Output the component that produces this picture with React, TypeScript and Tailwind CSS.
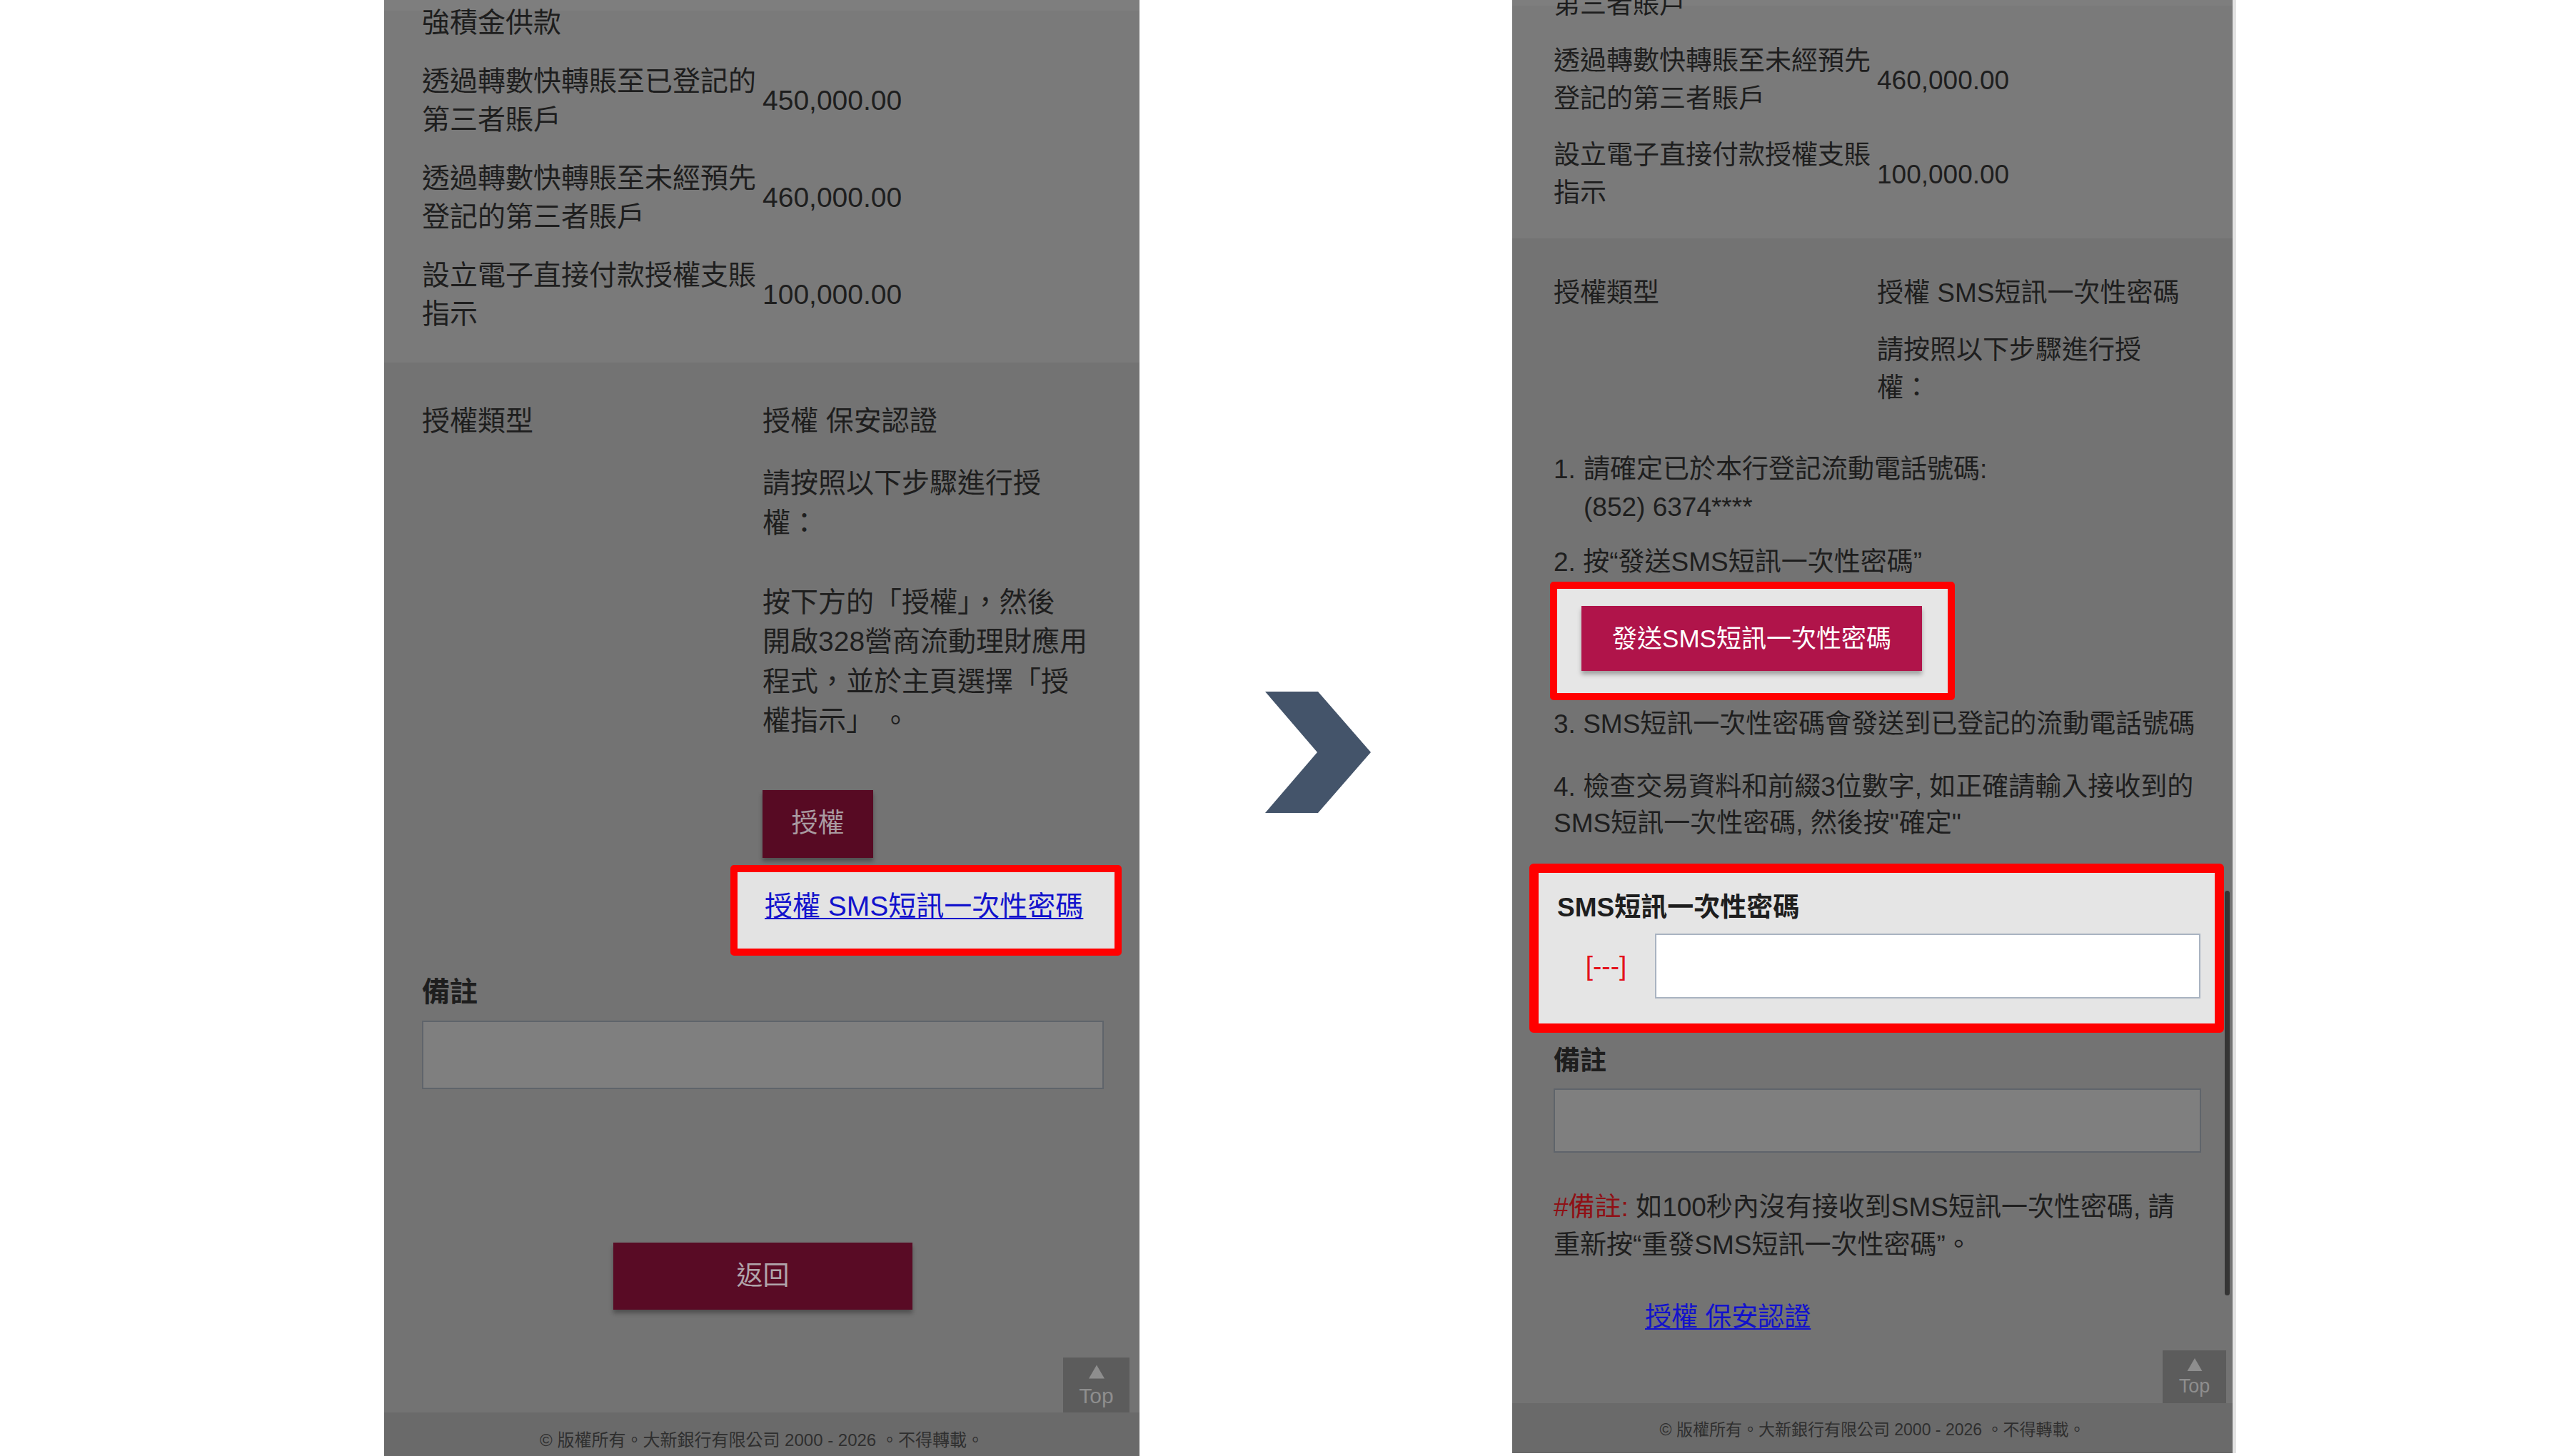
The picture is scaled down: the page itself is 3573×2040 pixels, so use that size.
import type { ReactNode } from "react";

const FONT = "font-['Liberation_Sans','Noto_Sans_CJK_TC',sans-serif]";

function AmountRowL({ label, value }: { label: ReactNode; value: string }) {
  return (
    <div className="grid grid-cols-[477px_1fr] items-center py-[14px]">
      <div className="whitespace-nowrap">{label}</div>
      <div>{value}</div>
    </div>
  );
}

function AmountRowR({ label, value }: { label: ReactNode; value: string }) {
  return (
    <div className="grid grid-cols-[453px_1fr] items-center py-[13px]">
      <div className="whitespace-nowrap">{label}</div>
      <div>{value}</div>
    </div>
  );
}

function TopButton({ className, text, tri }: { className: string; text: string; tri: string }) {
  return (
    <div className={`absolute flex flex-col items-center bg-[#5c5c5c] text-[#8e8e8e] ${className}`}>
      <svg viewBox="0 0 22 19" className={tri}>
        <polygon points="11,0 22,19 0,19" fill="#8e8e8e" />
      </svg>
      <span className={text}>Top</span>
    </div>
  );
}

function LeftPanel() {
  return (
    <div className="relative flex h-[2040px] w-[1058px] shrink-0 flex-col overflow-hidden bg-[#737373] text-[39px] text-[#1e1e1e]">
      {/* amounts */}
      <div className="border-t-[15px] border-[#7e7e7e] bg-[#7a7a7a] pb-[27px] pl-[53px] pr-[50px] leading-[54px]">
        <div className="-mt-[10px] pb-[14px]">強積金供款</div>
        <AmountRowL
          label={<>透過轉數快轉賬至已登記的<br />第三者賬戶</>}
          value="450,000.00"
        />
        <AmountRowL
          label={<>透過轉數快轉賬至未經預先<br />登記的第三者賬戶</>}
          value="460,000.00"
        />
        <AmountRowL
          label={<>設立電子直接付款授權支賬<br />指示</>}
          value="100,000.00"
        />
      </div>

      {/* authorisation */}
      <div className="flex-1 pl-[53px] pr-[50px] pt-[54px]">
        <div className="grid grid-cols-[477px_1fr]">
          <div className="leading-[55px]">授權類型</div>
          <div className="flex flex-col items-start">
            <p className="leading-[55px]">授權 保安認證</p>
            <p className="mt-[32px] whitespace-nowrap leading-[55.5px]">
              請按照以下步驟進行授<br />權：<br /><br />按下方的「授權」，然後<br />開啟328營商流動理財應用<br />程式，並於主頁選擇「授<br />權指示」 。
            </p>
            <button
              type="button"
              className="mt-[69px] h-[95px] w-[155px] bg-[#570a23] text-[37px] text-[#a99ba1] shadow-[0_5px_6px_rgba(0,0,0,0.3)]"
            >
              授權
            </button>
            <div className="-ml-[45px] mt-[10px] h-[127px] w-[548px] rounded-[5px] border-[10px] border-[#ff0000] bg-[#e3e3e3] pl-[38px] pt-[19px]">
              <a className="whitespace-nowrap leading-[55px] text-[#1212cc] underline decoration-[2px] underline-offset-[3px]">
                授權 SMS短訊一次性密碼
              </a>
            </div>
          </div>
        </div>
        <div className="mt-[23px] font-bold leading-[55px]">備註</div>
        <input type="text" className="mt-[13px] block h-[96px] w-[955px] border-2 border-[#5f646b] bg-[#7f7f7f]" />
        <button
          type="button"
          className="mx-auto mt-[215px] block h-[94px] w-[419px] bg-[#590b25] text-[37px] text-[#b0a4aa] shadow-[0_5px_6px_rgba(0,0,0,0.3)]"
        >
          返回
        </button>
      </div>

      <div className="h-[61px] shrink-0 bg-[#6a6a6a] pt-[23px] text-center text-[24px] leading-[32px] text-[#2f2f2f]">
        © 版權所有。大新銀行有限公司 2000 - 2026 。不得轉載。
      </div>

      <TopButton
        className="bottom-[61px] right-[14px] h-[77px] w-[93px]"
        tri="mt-[10px] h-[20px] w-[22px]"
        text="mt-[9px] text-[30px] leading-[30px]"
      />
    </div>
  );
}

function RightPanel() {
  return (
    <div className="relative flex h-[2036px] w-[1009px] shrink-0 flex-col overflow-hidden bg-[#737373] text-[37px] text-[#1e1e1e] shadow-[5px_0_0_#e2e2e2]">
      {/* amounts */}
      <div className="border-t-[8px] border-[#7e7e7e] bg-[#7a7a7a] pb-[24px] pl-[58px] pr-[44px] leading-[53px]">
        <div className="-mt-[28px] pb-[13px]">第三者賬戶</div>
        <AmountRowR
          label={<>透過轉數快轉賬至未經預先<br />登記的第三者賬戶</>}
          value="460,000.00"
        />
        <AmountRowR
          label={<>設立電子直接付款授權支賬<br />指示</>}
          value="100,000.00"
        />
      </div>

      {/* SMS OTP */}
      <div className="flex-1 whitespace-nowrap pl-[58px] pr-[44px] pt-[50px] leading-[53px]">
        <div className="grid grid-cols-[453px_1fr]">
          <div>授權類型</div>
          <div>
            <p>授權 SMS短訊一次性密碼</p>
            <p className="mt-[27px]">請按照以下步驟進行授<br />權：</p>
          </div>
        </div>

        <div className="mt-[61px] flex">
          <span className="w-[42px] shrink-0">1.</span>
          <span>請確定已於本行登記流動電話號碼:<br />(852) 6374****</span>
        </div>
        <p className="mt-[24px]">2. 按“發送SMS短訊一次性密碼”</p>

        <div className="-ml-[5px] mt-[1px] w-[567px] rounded-[5px] border-[10px] border-[#ff0000] bg-[#e6e6e6] pb-[31px] pl-[34px] pt-[24px]">
          <button
            type="button"
            className="flex h-[91px] w-[477px] items-center justify-center bg-[#b0144a] text-[35px] text-white shadow-[0_5px_6px_rgba(0,0,0,0.3)]"
          >
            發送SMS短訊一次性密碼
          </button>
        </div>

        <p className="mt-[7px]">3. SMS短訊一次性密碼會發送到已登記的流動電話號碼</p>
        <p className="mt-[36px] leading-[51px]">
          4. 檢查交易資料和前綴3位數字, 如正確請輸入接收到的<br />SMS短訊一次性密碼, 然後按"確定"
        </p>

        <div className="-ml-[34px] mt-[31px] w-[973px] rounded-[6px] border-[13px] border-[#ff0000] bg-[#e5e5e5] pb-[35px] pl-[26px] pr-[20px] pt-[22px]">
          <div className="font-bold">SMS短訊一次性密碼</div>
          <div className="mt-[10px] flex items-center">
            <span className="w-[137px] shrink-0 text-center text-[#e3121c]">[---]</span>
            <input type="text" className="block h-[91px] flex-1 border-2 border-[#a9b3c1] bg-white" />
          </div>
        </div>

        <div className="mt-[13px] font-bold">備註</div>
        <input type="text" className="mt-[12px] block h-[90px] w-[907px] border-2 border-[#5f646b] bg-[#7f7f7f]" />

        <p className="mt-[50px]">
          <span className="text-[#8f1015]">#備註:</span> 如100秒內沒有接收到SMS短訊一次性密碼, 請<br />重新按“重發SMS短訊一次性密碼”。
        </p>
        <a className="ml-[128px] mt-[48px] block w-fit text-[#1212cc] underline decoration-[2px] underline-offset-[3px]">
          授權 保安認證
        </a>
      </div>

      <div className="h-[70px] shrink-0 bg-[#6a6a6a] pt-[21px] text-center text-[23px] leading-[32px] text-[#2f2f2f]">
        © 版權所有。大新銀行有限公司 2000 - 2026 。不得轉載。
      </div>

      <div className="absolute right-[4px] top-[1248px] h-[567px] w-[7px] rounded-full bg-[#353535]" />

      <TopButton
        className="bottom-[70px] right-[9px] h-[74px] w-[89px]"
        tri="mt-[11px] h-[18px] w-[22px]"
        text="mt-[8px] text-[27px] leading-[27px]"
      />
    </div>
  );
}

export default function App() {
  return (
    <div className={`flex h-[2040px] w-[3573px] items-start overflow-hidden bg-white pl-[538px] ${FONT}`}>
      <LeftPanel />
      <svg width="148" height="170" viewBox="0 0 148 170" className="ml-[176px] mt-[969px] shrink-0">
        <polygon points="0,0 74,0 148,85 74,170 0,170 73,85" fill="#44546a" />
      </svg>
      <div className="ml-[198px]">
        <RightPanel />
      </div>
    </div>
  );
}
